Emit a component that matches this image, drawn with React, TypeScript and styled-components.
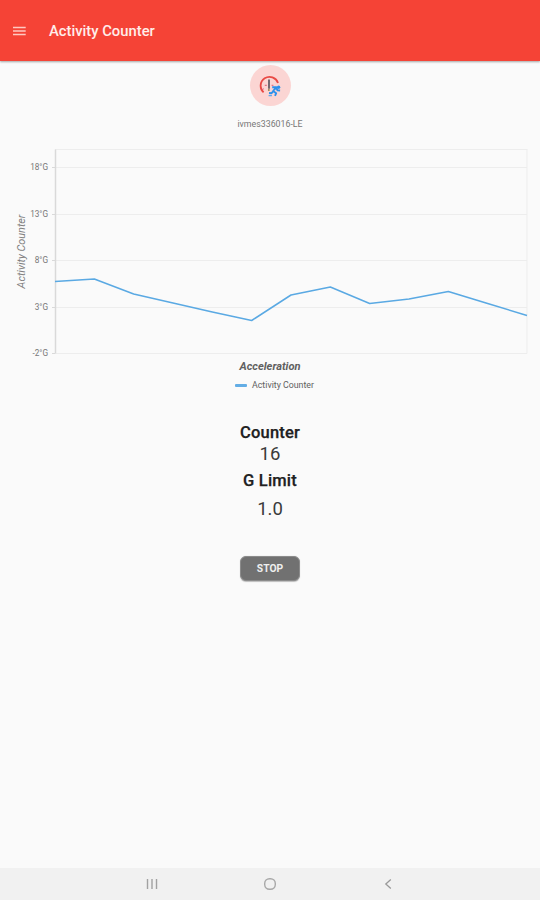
import React from "react";
import styled, { createGlobalStyle } from "styled-components";

const GlobalStyle = createGlobalStyle`
  *, *::before, *::after { box-sizing: border-box; }
  body { margin: 0; background: #fafafa; font-family: Roboto, sans-serif; color: #202020; }
`;

const Screen = styled.div`
  display: flex;
  flex-direction: column;
  width: 540px;
  height: 900px;
  overflow: hidden;
  background: #fafafa;
`;

const AppBar = styled.header`
  display: flex;
  align-items: center;
  flex: none;
  height: 61px;
  padding-left: 13px;
  background: #f54336;
  box-shadow: 0 1px 2px rgba(0, 0, 0, 0.35);
`;

const MenuButton = styled.button`
  display: flex;
  width: 13px;
  height: 12px;
  padding: 0;
  border: 0;
  background: none;
`;

const Title = styled.h1`
  margin: 0 0 0 23px;
  color: #ffedea;
  font-size: 14.8px;
  line-height: 20px;
  font-weight: 500;
`;

const Main = styled.main`
  display: flex;
  flex: 1;
  flex-direction: column;
  align-items: center;
`;

const Badge = styled.div`
  display: flex;
  align-items: center;
  justify-content: center;
  width: 41px;
  height: 41px;
  margin-top: 4px;
  border-radius: 50%;
  background: #fbd5d3;
`;

const DeviceName = styled.div`
  height: 12px;
  margin-top: 12px;
  color: #777;
  font-size: 8.8px;
  line-height: 12px;
`;

const ChartFigure = styled.figure`
  display: flex;
  flex-direction: column;
  align-items: center;
  width: 540px;
  margin: 18px 0 0;
`;

const ChartSvg = styled.svg`
  display: block;
  font-family: Roboto, sans-serif;
`;

const AxisTitle = styled.div`
  height: 14px;
  margin-top: 1px;
  color: #606060;
  font-size: 11.1px;
  line-height: 16px;
  font-style: italic;
  font-weight: 700;
`;

const Legend = styled.figcaption`
  display: flex;
  align-items: center;
  gap: 5px;
  height: 12px;
  margin: 6px 0 0 9px;
  color: #606060;
  font-size: 8.8px;
  line-height: 12px;
`;

const LegendMark = styled.span`
  width: 12px;
  height: 3px;
  border-radius: 1px;
  background: #63ade5;
`;

const Readings = styled.dl`
  display: flex;
  flex-direction: column;
  align-items: center;
  margin: 32px 0 0;
`;

const ReadingLabel = styled.dt`
  font-size: 16.5px;
  line-height: 20px;
  font-weight: 500;
  letter-spacing: 0.2px;
  -webkit-text-stroke: 0.25px currentColor;
`;

const ReadingValue = styled.dd<{ $top: number; $bottom: number }>`
  margin: ${({ $top, $bottom }) => `${$top}px 0 ${$bottom}px`};
  color: #3a3a3a;
  font-size: 18.5px;
  line-height: 22px;
`;

const StopButton = styled.button`
  width: 60px;
  height: 25px;
  margin-top: 36px;
  padding: 0;
  border: 1px solid #8b8b8b;
  border-radius: 6px;
  background: #717171;
  box-shadow: 0 0.5px 1px rgba(0, 0, 0, 0.25);
  color: #eee;
  font: 700 10.3px/22px Roboto, sans-serif;
`;

const NavBar = styled.nav`
  display: grid;
  grid-template-columns: repeat(3, 118px);
  justify-content: center;
  align-items: center;
  flex: none;
  height: 32px;
  background: #f1f1f1;
`;

const NavItem = styled.span`
  display: flex;
  justify-content: center;
`;

const ticks = [
  { label: "18°G", y: 18 },
  { label: "13°G", y: 65 },
  { label: "8°G", y: 111 },
  { label: "3°G", y: 158 },
  { label: "-2°G", y: 204 },
];

const samples = [132.5, 130, 145, 154, 163, 171.5, 146, 138, 154.5, 150, 142.5, 154.5, 166.5];

const PLOT_LEFT = 55;
const PLOT_WIDTH = 472;

function Chart() {
  const points = samples
    .map((y, i) => `${PLOT_LEFT + (i * PLOT_WIDTH) / (samples.length - 1)},${y}`)
    .join(" ");
  return (
    <ChartSvg width="540" height="210" viewBox="0 -1 540 210">
      <g stroke="#ededed" strokeWidth="1">
        <path d="M55 .5H527.5" />
        {ticks.map((t) => (
          <path key={t.label} d={`M55 ${t.y + 0.5}H527`} />
        ))}
        <path d="M527 .5V204.5" />
      </g>
      <g stroke="#d9d9d9" strokeWidth="1">
        {ticks.map((t) => (
          <path key={t.label} d={`M52 ${t.y + 0.5}H55`} />
        ))}
        <path d="M55.5 .5V204.5" strokeWidth="1.5" />
      </g>
      <g fill="#777" fontSize="8.2" textAnchor="end">
        {ticks.map((t) => (
          <text key={t.label} x="48" y={t.y + 3}>
            {t.label}
          </text>
        ))}
      </g>
      <text
        transform="translate(25.2 102.5) rotate(-90)"
        textAnchor="middle"
        fontSize="10.8"
        fontStyle="italic"
        fill="#808080"
      >
        Activity Counter
      </text>
      <polyline points={points} fill="none" stroke="#5aa9e3" strokeWidth="1.5" strokeLinejoin="round" />
    </ChartSvg>
  );
}

function MenuIcon() {
  return (
    <svg width="13" height="12" viewBox="0 0 13 12" fill="none" stroke="#ffc9c2" strokeWidth="1.6">
      <path d="M0 2.5H12.7M0 6H12.7M0 9.5H12.7" />
    </svg>
  );
}

function GaugeIcon() {
  return (
    <svg width="22" height="22" viewBox="0 0 22 22" fill="none">
      <path d="M4.6 17.4A8.9 8.9 0 1 1 19 8" stroke="#e94a45" strokeWidth="1.8" />
      <path d="M4.8 13.8l-2 .8M5.8 10.3H7.8M12.6 10.3h1.8" stroke="#df5b74" strokeWidth="1" />
      <path d="M10 4.4V13.8" stroke="#5a5660" strokeWidth="1.7" />
      <path d="M9.8 13.8v2.2" stroke="#a98f5c" strokeWidth="1.7" />
      <circle cx="19.6" cy="12.2" r="1.7" fill="#2c91ec" />
      <path
        d="M13.2 12.3l4.2-.1-3.3 3.8 3.1 2.2-1.2 2.6M17.2 12.3l1.3 3.1 2.6.1M14.6 15.9l-2 2.3-2.6-.2"
        stroke="#2c91ec"
        strokeWidth="1.9"
        strokeLinejoin="round"
      />
      <path d="M9.6 20.6h3.3" stroke="#5fa9ea" strokeWidth="1.3" />
    </svg>
  );
}

export default function App() {
  return (
    <>
      <GlobalStyle />
      <Screen>
        <AppBar>
          <MenuButton aria-label="Menu">
            <MenuIcon />
          </MenuButton>
          <Title>Activity Counter</Title>
        </AppBar>
        <Main>
          <Badge>
            <GaugeIcon />
          </Badge>
          <DeviceName>ivmes336016-LE</DeviceName>
          <ChartFigure>
            <Chart />
            <AxisTitle>Acceleration</AxisTitle>
            <Legend>
              <LegendMark />
              Activity Counter
            </Legend>
          </ChartFigure>
          <Readings>
            <ReadingLabel>Counter</ReadingLabel>
            <ReadingValue $top={0} $bottom={6}>16</ReadingValue>
            <ReadingLabel>G Limit</ReadingLabel>
            <ReadingValue $top={7} $bottom={0}>1.0</ReadingValue>
          </Readings>
          <StopButton>STOP</StopButton>
        </Main>
        <NavBar>
          <NavItem>
            <svg width="12" height="12" viewBox="0 0 12 12" stroke="#a2a2a2" strokeWidth="1.4">
              <path d="M1.5 1V11M6 1V11M10.5 1V11" />
            </svg>
          </NavItem>
          <NavItem>
            <svg width="14" height="14" viewBox="0 0 14 14" fill="none" stroke="#a8a8a8" strokeWidth="1.4">
              <rect x="1.7" y="1.7" width="10.6" height="10.6" rx="4.8" />
            </svg>
          </NavItem>
          <NavItem>
            <svg width="12" height="12" viewBox="0 0 12 12" fill="none" stroke="#999" strokeWidth="1.3">
              <path d="M8.8 1.5L3.8 6l5 4.5" />
            </svg>
          </NavItem>
        </NavBar>
      </Screen>
    </>
  );
}
